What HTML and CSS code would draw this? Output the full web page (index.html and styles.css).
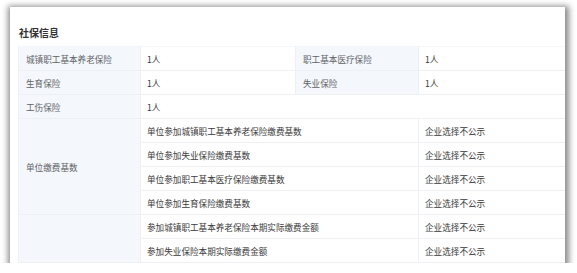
FILE: index.html
```html
<!DOCTYPE html>
<html lang="zh-CN">
<head>
<meta charset="utf-8">
<title>社保信息</title>
<link rel="stylesheet" href="styles.css">
</head>
<body>
<div class="card">
  <h3 class="title">社保信息</h3>
  <table class="info">
    <colgroup>
      <col class="c1"><col class="c2"><col class="c3"><col class="c4">
    </colgroup>
    <tbody>
      <tr>
        <th>城镇职工基本养老保险</th><td>1人</td>
        <th>职工基本医疗保险</th><td>1人</td>
      </tr>
      <tr>
        <th>生育保险</th><td>1人</td>
        <th>失业保险</th><td>1人</td>
      </tr>
      <tr>
        <th>工伤保险</th><td colspan="3">1人</td>
      </tr>
      <tr>
        <th rowspan="4">单位缴费基数</th>
        <td colspan="2">单位参加城镇职工基本养老保险缴费基数</td><td>企业选择不公示</td>
      </tr>
      <tr><td colspan="2">单位参加失业保险缴费基数</td><td>企业选择不公示</td></tr>
      <tr><td colspan="2">单位参加职工基本医疗保险缴费基数</td><td>企业选择不公示</td></tr>
      <tr><td colspan="2">单位参加生育保险缴费基数</td><td>企业选择不公示</td></tr>
      <tr>
        <th rowspan="2"></th>
        <td colspan="2">参加城镇职工基本养老保险本期实际缴费金额</td><td>企业选择不公示</td>
      </tr>
      <tr><td colspan="2">参加失业保险本期实际缴费金额</td><td>企业选择不公示</td></tr>
    </tbody>
  </table>
</div>
</body>
</html>
```
FILE: styles.css
```css
html, body {
  margin: 0;
  padding: 0;
  background: #ffffff;
}
body {
  font-family: "Noto Sans CJK SC", "Noto Sans", sans-serif;
  padding: 7px 0 0 10px;
}
.card {
  width: 555px;
  height: 256px;
  overflow: hidden;
  background: #fff;
  box-shadow: 1px 2px 6px 3px rgba(0, 0, 0, 0.45);
  padding-left: 8px;
  box-sizing: border-box;
}
.title {
  margin: 0;
  padding: 19px 0 0 1px;
  height: 39px;
  box-sizing: border-box;
  font-size: 10px;
  line-height: 14px;
  font-weight: 700;
  color: #333;
}
.info {
  border-collapse: collapse;
  table-layout: fixed;
  width: 547px;
  font-size: 8.6px;
}
.c1 { width: 122px; }
.c2 { width: 155px; }
.c3 { width: 123px; }
.c4 { width: 147px; }
.info th, .info td {
  height: 23px;
  padding: 0 6px;
  border: 1px solid #edf0f4;
  text-align: left;
  white-space: nowrap;
  line-height: 12px;
}
.info th {
  background: #f4f7fb;
  color: #5f6368;
  font-weight: 400;
  padding-left: 7px;
}
.info td {
  color: #3a3a3a;
  background: #fff;
}
.info tr:first-child th, .info tr:first-child td {
  border-top-color: #f4f7fb;
}
```
